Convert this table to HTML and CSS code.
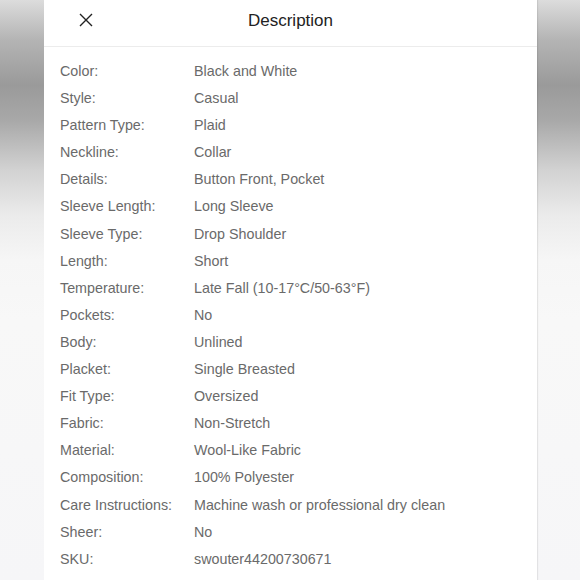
FILE: index.html
```html
<!DOCTYPE html>
<html>
<head>
<meta charset="utf-8">
<link rel="stylesheet" href="styles.css">
</head>
<body>
<div class="page">
  <div class="panel">
    <div class="header">
      <span class="close">
        <svg width="14" height="14" viewBox="0 0 14 14"><path d="M1 1 L13 13 M13 1 L1 13" stroke="#222" stroke-width="1.4" fill="none"/></svg>
      </span>
      <span class="title">Description</span>
    </div>
    <div class="list">
      <div class="row"><span class="label">Color:</span><span class="value">Black and White</span></div>
      <div class="row"><span class="label">Style:</span><span class="value">Casual</span></div>
      <div class="row"><span class="label">Pattern Type:</span><span class="value">Plaid</span></div>
      <div class="row"><span class="label">Neckline:</span><span class="value">Collar</span></div>
      <div class="row"><span class="label">Details:</span><span class="value">Button Front, Pocket</span></div>
      <div class="row"><span class="label">Sleeve Length:</span><span class="value">Long Sleeve</span></div>
      <div class="row"><span class="label">Sleeve Type:</span><span class="value">Drop Shoulder</span></div>
      <div class="row"><span class="label">Length:</span><span class="value">Short</span></div>
      <div class="row"><span class="label">Temperature:</span><span class="value">Late Fall (10-17°C/50-63°F)</span></div>
      <div class="row"><span class="label">Pockets:</span><span class="value">No</span></div>
      <div class="row"><span class="label">Body:</span><span class="value">Unlined</span></div>
      <div class="row"><span class="label">Placket:</span><span class="value">Single Breasted</span></div>
      <div class="row"><span class="label">Fit Type:</span><span class="value">Oversized</span></div>
      <div class="row"><span class="label">Fabric:</span><span class="value">Non-Stretch</span></div>
      <div class="row"><span class="label">Material:</span><span class="value">Wool-Like Fabric</span></div>
      <div class="row"><span class="label">Composition:</span><span class="value">100% Polyester</span></div>
      <div class="row"><span class="label">Care Instructions:</span><span class="value">Machine wash or professional dry clean</span></div>
      <div class="row"><span class="label">Sheer:</span><span class="value">No</span></div>
      <div class="row"><span class="label">SKU:</span><span class="value">swouter44200730671</span></div>
    </div>
  </div>
</div>
</body>
</html>
```
FILE: styles.css
```css
html, body {
  margin: 0;
  padding: 0;
}
body {
  width: 580px;
  height: 580px;
  overflow: hidden;
  font-family: "Liberation Sans", Arial, sans-serif;
  background: linear-gradient(to bottom, #dcdcdc 0px, #b4b4b4 40px, #9a9a9a 85px, #a8a8a8 120px, #d2d2d2 170px, #ebebeb 215px, #f6f6f6 260px, #f8f8f8 320px, #f6f6f8 580px);
}
.page {
  display: flex;
  justify-content: flex-start;
  padding-left: 44px;
  height: 580px;
}
.panel {
  width: 493px;
  height: 580px;
  background: #fff;
  box-shadow: 1px 0 1px rgba(0,0,0,0.08);
}
.header {
  height: 46px;
  border-bottom: 1px solid #ececec;
  display: flex;
  align-items: center;
  justify-content: center;
  position: relative;
}
.close {
  position: absolute;
  left: 35px;
  top: 13px;
  width: 14px;
  height: 14px;
  display: flex;
}
.title {
  font-size: 17px;
  color: #222;
  margin-top: -5px;
}
.list {
  padding: 11px 0 0 16px;
}
.row {
  display: flex;
  height: 27.1px;
  line-height: 27px;
  font-size: 14.3px;
  color: #6a6a6a;
}
.label {
  width: 134px;
  flex: none;
}
.value {
  white-space: nowrap;
}
```
